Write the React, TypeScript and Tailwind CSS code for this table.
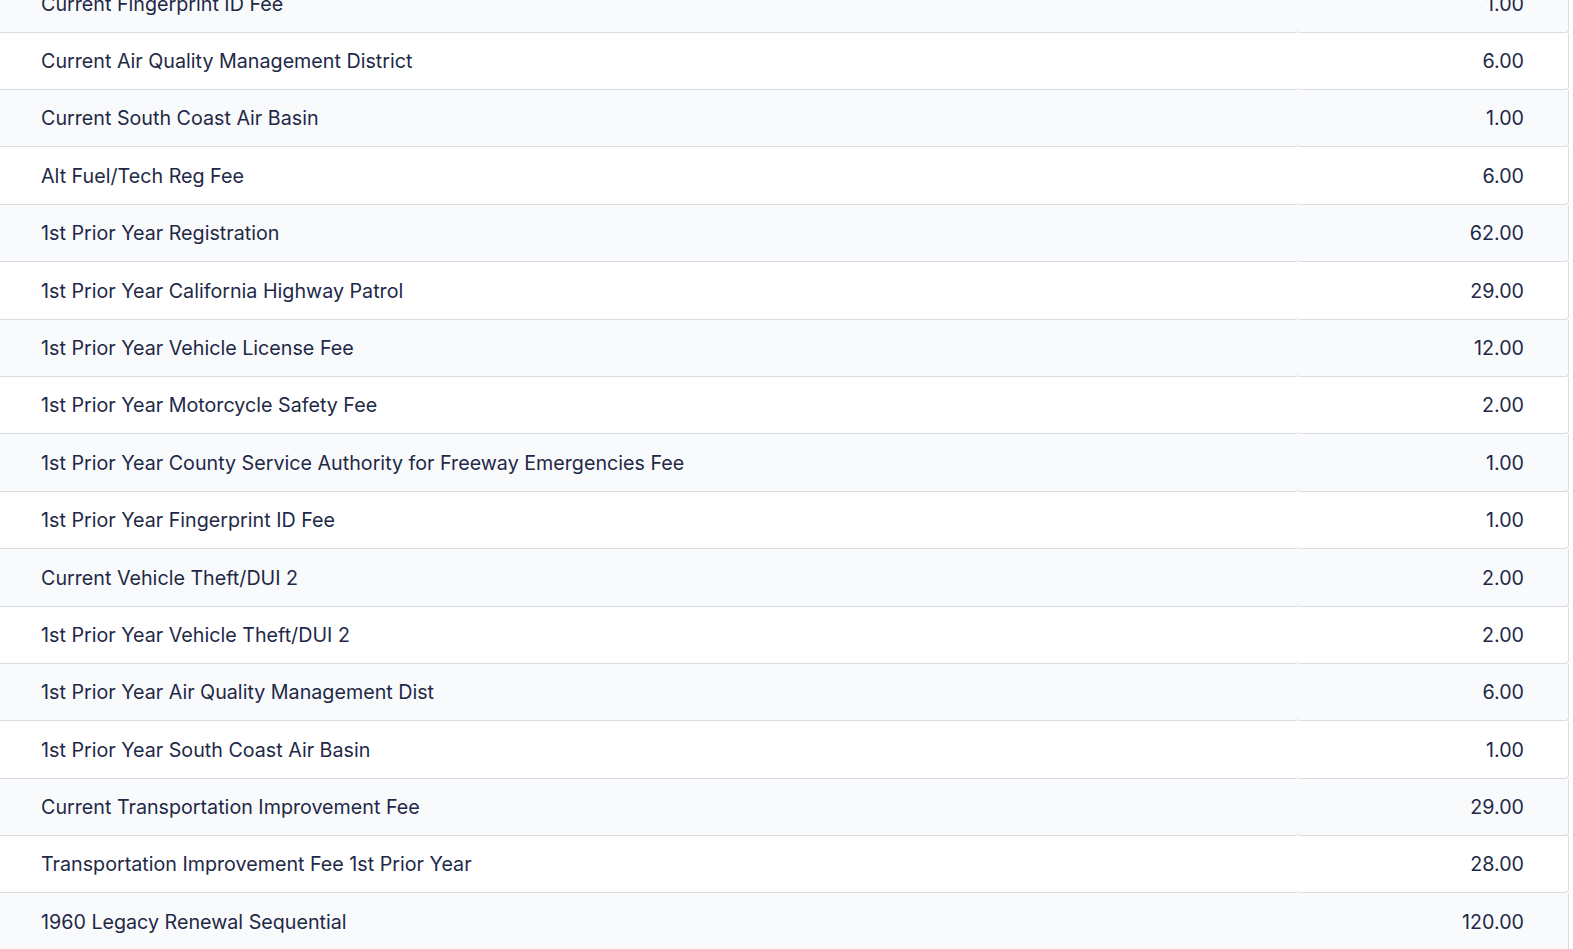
import React from "react";

const fees: [string, string][] = [
  ["Current Fingerprint ID Fee", "1.00"],
  ["Current Air Quality Management District", "6.00"],
  ["Current South Coast Air Basin", "1.00"],
  ["Alt Fuel/Tech Reg Fee", "6.00"],
  ["1st Prior Year Registration", "62.00"],
  ["1st Prior Year California Highway Patrol", "29.00"],
  ["1st Prior Year Vehicle License Fee", "12.00"],
  ["1st Prior Year Motorcycle Safety Fee", "2.00"],
  ["1st Prior Year County Service Authority for Freeway Emergencies Fee", "1.00"],
  ["1st Prior Year Fingerprint ID Fee", "1.00"],
  ["Current Vehicle Theft/DUI 2", "2.00"],
  ["1st Prior Year Vehicle Theft/DUI 2", "2.00"],
  ["1st Prior Year Air Quality Management Dist", "6.00"],
  ["1st Prior Year South Coast Air Basin", "1.00"],
  ["Current Transportation Improvement Fee", "29.00"],
  ["Transportation Improvement Fee 1st Prior Year", "28.00"],
  ["1960 Legacy Renewal Sequential", "120.00"],
];

export default function App() {
  return (
    <div className="h-[949px] overflow-hidden bg-white">
      <div
        className="mt-[-24.8px] w-[1569px] text-[19.7px] text-[#1e2947]"
        style={{ fontFamily: "Inter, 'Noto Sans', sans-serif" }}
      >
        {fees.map(([label, amount], i) => (
          <div
            key={i}
            className={`flex h-[57.4px] ${i % 2 === 0 ? "bg-[#f9fafc]" : "bg-white"}`}
          >
            <div className="flex flex-1 items-center border-b border-[#d9dce1] pt-[2px] pl-[41px]">
              {label}
            </div>
            <div className="flex w-[272px] items-center justify-end rounded-b-[4px] border-r border-b border-[#d9dce1] pt-[2px] pr-[44px]">
              {amount}
            </div>
          </div>
        ))}
      </div>
    </div>
  );
}
